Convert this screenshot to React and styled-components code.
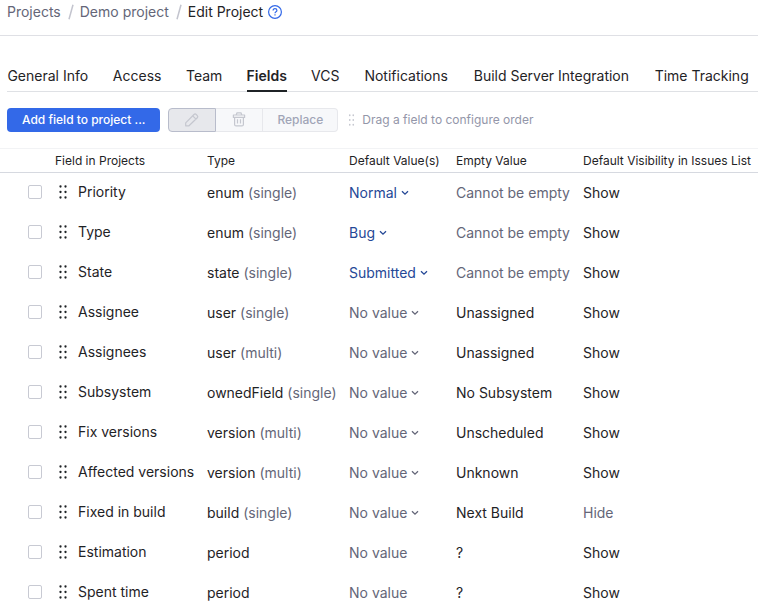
import React from "react";
import styled, { createGlobalStyle, css } from "styled-components";

const GlobalStyle = createGlobalStyle`
  *, *::before, *::after { box-sizing: border-box; }
  body {
    margin: 0;
    background: #fff;
    color: #1f2326;
    font-family: Inter, "Liberation Sans", sans-serif;
    font-size: 14px;
    line-height: 20px;
  }
  button { font: inherit; color: inherit; }
`;

const Page = styled.div`
  height: 100vh;
  overflow: hidden auto;
  scrollbar-width: none;
`;

const Breadcrumbs = styled.nav`
  display: flex;
  align-items: center;
  height: 36px;
  padding: 0 7px 11px;
  border-bottom: 1px solid #dfe0e5;
  white-space: nowrap;
`;

const Crumb = styled.a`
  color: #646678;
  text-decoration: none;
`;

const Slash = styled.svg`
  width: 6px;
  height: 16px;
  margin: 0 6px 0 7px;
`;

const Current = styled.span`
  color: #1f2326;
`;

const HelpButton = styled.button`
  display: flex;
  margin: 0 0 0 4px;
  padding: 0;
  border: 0;
  background: none;
`;

const Tabs = styled.div`
  display: flex;
  gap: 24px;
  margin: 28px 0 0 7px;
  box-shadow: inset 0 -1px #dfe1e5;
`;

const Tab = styled.button`
  display: grid;
  justify-items: center;
  flex: none;
  height: 28px;
  padding: 2px 0 0;
  border: 0;
  border-bottom: 2px solid ${(p) => (p.$active ? "#1f2326" : "transparent")};
  background: none;
  font-weight: ${(p) => (p.$active ? 600 : 400)};
  white-space: nowrap;

  &::after {
    content: attr(data-label);
    height: 0;
    overflow: hidden;
    visibility: hidden;
    font-weight: 500;
  }
`;

const Toolbar = styled.div`
  display: flex;
  align-items: center;
  height: 24px;
  margin: 16px 7px;
  font-size: 12px;
  white-space: nowrap;
`;

const PrimaryButton = styled.button`
  height: 24px;
  padding: 0 15px;
  border: 0;
  border-radius: 4px;
  background: #3369e8;
  color: #fff;
  font-weight: 500;
`;

const ButtonGroup = styled.div`
  display: flex;
  margin-left: 8px;
`;

const GroupButton = styled.button`
  display: flex;
  align-items: center;
  justify-content: center;
  height: 24px;
  padding: 0 ${(p) => (p.$text ? 14 : 15)}px;
  border: 1px solid #e7e8ec;
  border-left-width: 0;
  background: #f7f8fa;
  color: #a1a5b7;
  font-weight: 500;

  &:first-child {
    border-left-width: 1px;
    border-radius: 4px 0 0 4px;
  }
  &:last-child { border-radius: 0 4px 4px 0; }

  ${(p) =>
    p.$pressed &&
    css`
      border-color: #b8bccb;
      background: #e7e8ec;
      color: #c5c7cf;
    `}
`;

const Hint = styled.span`
  display: flex;
  align-items: center;
  gap: 7px;
  margin-left: 10px;
  color: #9396a9;
`;

const Table = styled.table`
  width: 100%;
  min-width: 758px;
  table-layout: fixed;
  border-spacing: 0;
  white-space: nowrap;
`;

const Column = styled.col`
  width: ${(p) => (p.$width ? `${p.$width}px` : "auto")};
`;

const HeadCell = styled.th`
  height: 25px;
  padding: 0;
  border-top: 1px solid #f2f3f5;
  border-bottom: 1px solid #d6d9e0;
  font-size: 12px;
  font-weight: 400;
  line-height: 23px;
  text-align: left;
`;

const Cell = styled.td`
  height: 40px;
  padding: 0;
  color: ${(p) => (p.$muted ? "#646678" : "#1f2326")};
`;

const CheckCell = styled(Cell)`
  padding: 0 0 2px 28px;
`;

const Checkbox = styled.input`
  display: block;
  appearance: none;
  width: 14px;
  height: 14px;
  margin: 0;
  border: 1px solid #c8cad3;
  border-radius: 2px;
  background: #fff;
`;

const FieldLabel = styled.label`
  display: flex;
  align-items: center;
  gap: 10px;
  padding: 0 0 2px 3px;
`;

const Muted = styled.span`
  color: #646678;
`;

const ValueButton = styled.button`
  display: flex;
  align-items: center;
  gap: 4px;
  padding: 0;
  border: 0;
  background: none;
  color: ${(p) => (p.$set ? "#254896" : "#646678")};
`;

const Grip = ({ small }) => (
  <svg
    width={small ? 7 : 10}
    height={small ? 12 : 14}
    viewBox="0 0 10 14"
    preserveAspectRatio="none"
    fill={small ? "#c5c7cf" : "#1f2326"}
    aria-hidden="true"
  >
    {[1.5, 7, 12.5].map((y) =>
      [2.5, 7.5].map((x) => <circle key={`${x}-${y}`} cx={x} cy={y} r="1.15" />)
    )}
  </svg>
);

const Chevron = () => (
  <svg width="8" height="6" viewBox="0 0 8 6" fill="none" stroke="currentColor" strokeWidth="1.3" aria-hidden="true">
    <path d="M1 1.2 4 4.2 7 1.2" />
  </svg>
);

const Pencil = () => (
  <svg width="16" height="16" viewBox="0 0 16 16" fill="none" stroke="currentColor" strokeWidth="1.2" strokeLinejoin="round" aria-hidden="true">
    <path d="M1.7 13.8v-3L10 2.5a1.6 1.6 0 0 1 2.2 0l1.1 1.1a1.6 1.6 0 0 1 0 2.2L5 13.8ZM8.7 3.9 12 7.2" />
  </svg>
);

const Trash = () => (
  <svg width="16" height="16" viewBox="0 0 16 16" fill="none" stroke="#c5c7cf" strokeWidth="1.2" strokeLinejoin="round" aria-hidden="true">
    <path d="M2.4 5.4V3h11.2v2.4ZM5.2 3 6 .8h4L10.8 3M3.6 5.4v7a1.5 1.5 0 0 0 1.5 1.5h5.8a1.5 1.5 0 0 0 1.5-1.5v-7M6.5 7.3v4.3M9.5 7.3v4.3" />
  </svg>
);

const Help = () => (
  <svg width="16" height="16" viewBox="0 0 16 16" fill="none" stroke="#3369e8" strokeWidth="1.2" aria-hidden="true">
    <circle cx="8" cy="8" r="6.4" />
    <path d="M6.1 6.6C6.1 5.4 6.9 4.7 8 4.7s1.9.7 1.9 1.7c0 1.3-1.9 1.4-1.9 2.8M8 10.2v1.3" />
  </svg>
);

const Separator = () => (
  <Slash viewBox="0 0 6 16" fill="none" stroke="#c3c4ce" strokeWidth="1.5" aria-hidden="true">
    <path d="M5 .8 1 15.2" />
  </Slash>
);

const TABS = [
  "General Info",
  "Access",
  "Team",
  "Fields",
  "VCS",
  "Notifications",
  "Build Server Integration",
  "Time Tracking",
];

const COLUMNS = [
  { width: 55, title: "" },
  { width: 152, title: "Field in Projects" },
  { width: 142, title: "Type" },
  { width: 107, title: "Default Value(s)" },
  { width: 127, title: "Empty Value" },
  { title: "Default Visibility in Issues List" },
];

const FIELDS = [
  { name: "Priority", type: "enum", arity: "single", value: "Normal", empty: "Cannot be empty" },
  { name: "Type", type: "enum", arity: "single", value: "Bug", empty: "Cannot be empty" },
  { name: "State", type: "state", arity: "single", value: "Submitted", empty: "Cannot be empty" },
  { name: "Assignee", type: "user", arity: "single", empty: "Unassigned" },
  { name: "Assignees", type: "user", arity: "multi", empty: "Unassigned" },
  { name: "Subsystem", type: "ownedField", arity: "single", empty: "No Subsystem" },
  { name: "Fix versions", type: "version", arity: "multi", empty: "Unscheduled" },
  { name: "Affected versions", type: "version", arity: "multi", empty: "Unknown" },
  { name: "Fixed in build", type: "build", arity: "single", empty: "Next Build", hidden: true },
  { name: "Estimation", type: "period", empty: "?" },
  { name: "Spent time", type: "period", empty: "?" },
];

function FieldRow({ field, id }) {
  return (
    <tr>
      <CheckCell>
        <Checkbox type="checkbox" id={id} />
      </CheckCell>
      <Cell>
        <FieldLabel htmlFor={id}>
          <Grip />
          {field.name}
        </FieldLabel>
      </Cell>
      <Cell>
        {field.type} {field.arity && <Muted>({field.arity})</Muted>}
      </Cell>
      <Cell>
        {field.arity ? (
          <ValueButton type="button" $set={Boolean(field.value)}>
            {field.value || "No value"}
            <Chevron />
          </ValueButton>
        ) : (
          <Muted>No value</Muted>
        )}
      </Cell>
      <Cell $muted={field.empty === "Cannot be empty"}>{field.empty}</Cell>
      <Cell $muted={field.hidden}>{field.hidden ? "Hide" : "Show"}</Cell>
    </tr>
  );
}

export default function App() {
  return (
    <>
      <GlobalStyle />
      <Page>
        <Breadcrumbs aria-label="Breadcrumb">
          <Crumb href="#projects">Projects</Crumb>
          <Separator />
          <Crumb href="#demo">Demo project</Crumb>
          <Separator />
          <Current>Edit Project</Current>
          <HelpButton type="button" aria-label="Help">
            <Help />
          </HelpButton>
        </Breadcrumbs>
        <Tabs role="tablist">
          {TABS.map((label) => (
            <Tab
              key={label}
              type="button"
              role="tab"
              data-label={label}
              aria-selected={label === "Fields"}
              $active={label === "Fields"}
            >
              {label}
            </Tab>
          ))}
        </Tabs>
        <Toolbar>
          <PrimaryButton type="button">Add field to project ...</PrimaryButton>
          <ButtonGroup>
            <GroupButton type="button" $pressed aria-label="Edit">
              <Pencil />
            </GroupButton>
            <GroupButton type="button" aria-label="Delete">
              <Trash />
            </GroupButton>
            <GroupButton type="button" $text>
              Replace
            </GroupButton>
          </ButtonGroup>
          <Hint>
            <Grip small />
            Drag a field to configure order
          </Hint>
        </Toolbar>
        <Table>
          <colgroup>
            {COLUMNS.map((column) => (
              <Column key={column.title} $width={column.width} />
            ))}
          </colgroup>
          <thead>
            <tr>
              {COLUMNS.map((column) => (
                <HeadCell key={column.title} scope="col">
                  {column.title}
                </HeadCell>
              ))}
            </tr>
          </thead>
          <tbody>
            {FIELDS.map((field, index) => (
              <FieldRow key={field.name} field={field} id={`field-${index}`} />
            ))}
          </tbody>
        </Table>
      </Page>
    </>
  );
}
